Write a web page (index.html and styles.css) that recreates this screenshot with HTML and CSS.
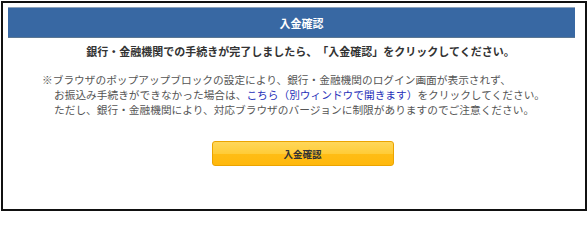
FILE: index.html
```html
<!DOCTYPE html>
<html lang="ja">
<head>
<meta charset="utf-8">
<title>入金確認</title>
<link rel="stylesheet" href="styles.css">
</head>
<body>
<div class="frame">
  <div class="header">入金確認</div>
  <div class="content">
    <p class="lead">銀行・金融機関での手続きが完了しましたら、「入金確認」をクリックしてください。</p>
    <p class="note">※ブラウザのポップアップブロックの設定により、銀行・金融機関のログイン画面が表示されず、<br>お振込み手続きができなかった場合は、<a class="link" href="#">こちら（別ウィンドウで開きます）</a>をクリックしてください。<br>ただし、銀行・金融機関により、対応ブラウザのバージョンに制限がありますのでご注意ください。</p>
    <div class="actions">
      <button class="btn" type="button">入金確認</button>
    </div>
  </div>
</div>
</body>
</html>
```

FILE: styles.css
```css
html, body {
  margin: 0;
  padding: 0;
  background: #fff;
}
body {
  font-family: "Noto Sans CJK JP", "Noto Sans", sans-serif;
  width: 588px;
  height: 212px;
  overflow: hidden;
  text-spacing-trim: space-all;
}
.frame {
  margin: 1px 0 0 1px;
  width: 586px;
  height: 210px;
  box-sizing: border-box;
  border: 2px solid #111;
  padding: 4px 10px 0 5px;
}
.header {
  height: 31px;
  box-sizing: border-box;
  background: #3868a3;
  border-top: 1px solid #8ea3bb;
  border-bottom: 1px solid #5b7793;
  color: #fff;
  font-weight: bold;
  font-size: 11px;
  display: flex;
  align-items: center;
  justify-content: center;
  padding-left: 20px;
}
.content {
  padding-left: 18px;
}
.lead {
  margin: 6px 0 0;
  font-size: 11px;
  line-height: 15px;
  font-weight: bold;
  color: #333;
  text-align: center;
  white-space: nowrap;
}
.note {
  margin: 13px 0 0 16px;
  padding-left: 12px;
  text-indent: -12px;
  font-size: 10.7px;
  line-height: 15px;
  color: #555;
  white-space: nowrap;
}
.link {
  color: #2630b8;
  text-decoration: none;
}
.actions {
  margin-top: 24px;
  display: flex;
  justify-content: center;
  padding-left: 4px;
}
.btn {
  width: 182px;
  height: 25px;
  box-sizing: border-box;
  border: 1px solid #eba400;
  border-radius: 3px;
  background: linear-gradient(to bottom, #ffd75a 0%, #ffcc38 50%, #ffbd15 52%, #ffb80c 100%);
  font-family: "Noto Sans CJK JP", "Noto Sans", sans-serif;
  font-size: 9.5px;
  font-weight: bold;
  color: #333;
  padding: 0;
  cursor: pointer;
}
```
